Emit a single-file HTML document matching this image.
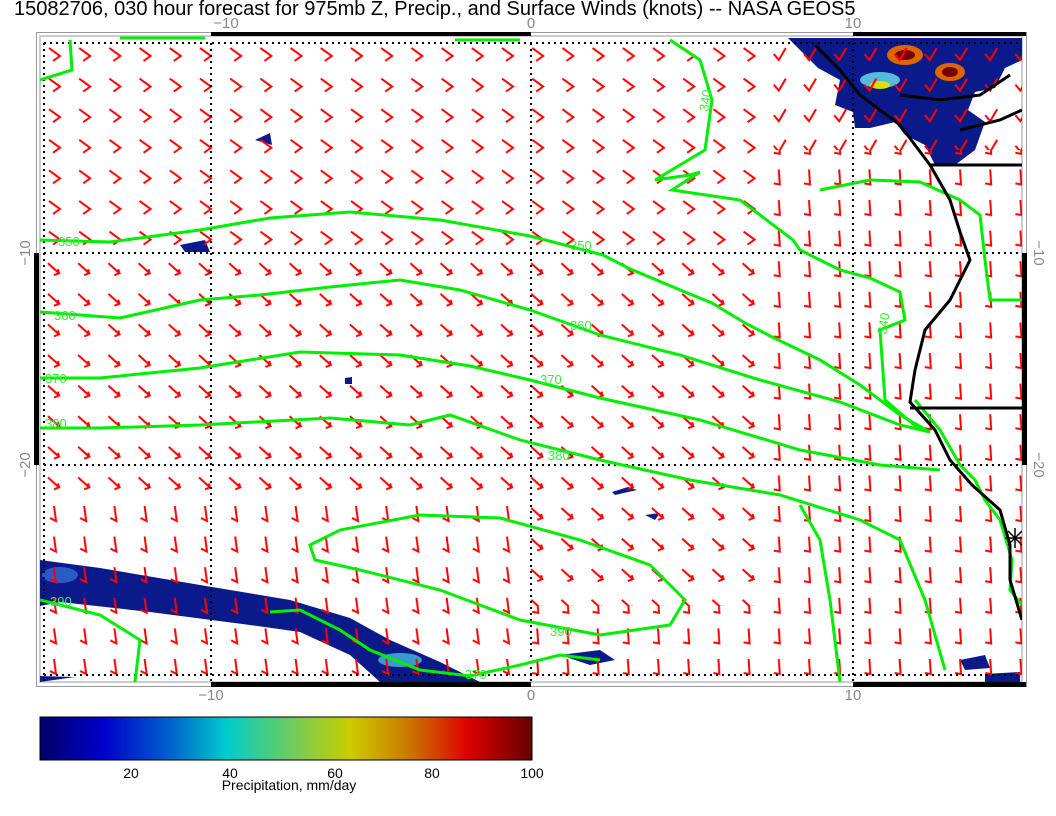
<!DOCTYPE html>
<html><head><meta charset="utf-8"><style>
html,body{margin:0;padding:0;background:#fff;width:1056px;height:816px;overflow:hidden}
svg{display:block}
text{font-family:"Liberation Sans",sans-serif}
</style></head><body>
<svg width="1056" height="816" viewBox="0 0 1056 816" xmlns="http://www.w3.org/2000/svg">
<defs>
<pattern id="pA" patternUnits="userSpaceOnUse" x="44" y="44" width="30.2" height="30.6">
<path d="M5 4 L16 12 L9 17" fill="none" stroke="#f00" stroke-width="2"/></pattern>
<pattern id="pB" patternUnits="userSpaceOnUse" x="44" y="44" width="30.2" height="30.6">
<path d="M4 5 L15 15 L10 17 M15 15 L14 11" fill="none" stroke="#f00" stroke-width="2"/></pattern>
<pattern id="pC" patternUnits="userSpaceOnUse" x="44" y="44" width="30.2" height="30.6">
<path d="M10 3 L12 18 L6 15" fill="none" stroke="#f00" stroke-width="2"/></pattern>
<pattern id="pD" patternUnits="userSpaceOnUse" x="44" y="44" width="30.2" height="30.6">
<path d="M10 3 L11 18 L5 17" fill="none" stroke="#f00" stroke-width="2"/></pattern>
<pattern id="pE" patternUnits="userSpaceOnUse" x="44" y="44" width="30.2" height="30.6">
<path d="M5 10 L10 16 L17 4" fill="none" stroke="#f00" stroke-width="2"/></pattern>
<linearGradient id="cb" x1="0" x2="1" y1="0" y2="0">
<stop offset="0" stop-color="#000066"/><stop offset="0.13" stop-color="#0000cc"/>
<stop offset="0.27" stop-color="#0066cc"/><stop offset="0.38" stop-color="#00cccc"/>
<stop offset="0.5" stop-color="#66cc66"/><stop offset="0.63" stop-color="#cccc00"/>
<stop offset="0.75" stop-color="#cc7700"/><stop offset="0.87" stop-color="#dd0000"/>
<stop offset="1" stop-color="#660000"/></linearGradient>
<clipPath id="map"><rect x="40" y="36" width="982" height="650"/></clipPath>
</defs>
<text x="14" y="15" font-size="20" fill="#000">15082706, 030 hour forecast for 975mb Z, Precip., and Surface Winds (knots) -- NASA GEOS5</text>
<g font-size="15" fill="#888" text-anchor="middle">
<text x="226" y="28">−10</text><text x="531" y="28">0</text><text x="853" y="28">10</text>
<text x="211" y="700">−10</text><text x="531" y="700">0</text><text x="853" y="700">10</text>
<text transform="translate(30,253) rotate(-90)">−10</text>
<text transform="translate(30,465) rotate(-90)">−20</text>
<text transform="translate(1034,253) rotate(90)">−10</text>
<text transform="translate(1034,465) rotate(90)">−20</text>
</g>
<rect x="36.5" y="32.5" width="990" height="654" fill="none" stroke="#999" stroke-width="1"/>
<rect x="40" y="36" width="982" height="646" fill="none" stroke="#ccc" stroke-width="2"/>
<g fill="#000">
<rect x="211" y="32" width="320" height="4"/><rect x="853" y="32" width="173" height="4"/>
<rect x="211" y="682" width="320" height="5"/><rect x="853" y="682" width="173" height="5"/>
<rect x="34" y="253" width="5" height="212"/><rect x="1022" y="253" width="5" height="212"/>
</g>
<g clip-path="url(#map)">
<g fill="#0a1a8a">
<path d="M40 560 L100 568 L200 585 L290 600 L350 618 L390 640 L440 662 L480 682 L380 682 L350 655 L300 632 L250 625 L150 612 L60 602 L40 606Z"/>
<path d="M788 38 H1022 V60 L1005 68 L995 88 L975 92 L968 110 L985 122 L975 150 L955 165 L935 165 L925 145 L905 135 L895 122 L870 128 L855 128 L853 112 L835 105 L840 80 L818 68 Z"/>
<path d="M560 655 L600 650 L615 660 L590 665Z"/>
<path d="M960 660 L985 655 L990 668 L965 670Z"/>
<path d="M180 245 L205 240 L210 252 L185 252Z"/>
<path d="M255 140 L270 133 L272 145Z"/>
<path d="M612 492 L628 487 L637 490 L615 495Z"/>
<path d="M645 515 L660 513 L655 520Z"/>
<path d="M40 676 L75 677 L40 682Z"/>
<path d="M985 674 L1020 672 L1020 682 L985 682Z"/>
<path d="M345 378 L352 377 L352 384 L345 384Z"/>
</g>
<ellipse cx="60" cy="575" rx="18" ry="8" fill="#2a5ac8"/>
<ellipse cx="400" cy="660" rx="22" ry="7" fill="#3a9ad0"/>
<ellipse cx="880" cy="80" rx="20" ry="8" fill="#55bbdd"/>
<ellipse cx="905" cy="55" rx="18" ry="10" fill="#dd6600"/><ellipse cx="905" cy="55" rx="10" ry="5" fill="#770000"/>
<ellipse cx="950" cy="72" rx="15" ry="9" fill="#dd6600"/><ellipse cx="950" cy="72" rx="8" ry="5" fill="#770000"/>
<ellipse cx="880" cy="85" rx="10" ry="4" fill="#dddd00"/>
<rect x="40" y="36" width="720" height="220" fill="url(#pA)"/>
<rect x="760" y="36" width="262" height="114" fill="url(#pE)"/>
<rect x="760" y="150" width="262" height="532" fill="url(#pD)"/>
<rect x="40" y="256" width="720" height="240" fill="url(#pB)"/>
<rect x="40" y="496" width="480" height="186" fill="url(#pC)"/>
<rect x="520" y="496" width="240" height="110" fill="url(#pB)"/>
<rect x="520" y="606" width="240" height="76" fill="url(#pD)"/>
<g stroke="#000" stroke-width="2" stroke-dasharray="2 4" fill="none">
<path d="M211 43V682M531 43V682M853 43V682M44 43H1022M44 253H1022M44 465H1022M44 675H1022M44 43V682"/>
</g>
<g fill="none" stroke="#00ee00" stroke-width="3">
<path d="M70 40 L72 70 L40 80"/>
<path d="M120 38 L205 38"/>
<path d="M455 40 L520 40"/>
<path d="M670 40 L700 60 L712 100 L705 150 L655 180 L690 175 L700 172 L672 190 L740 200 L760 215 L793 240 L800 250 L820 260 L840 270 L870 278 L900 292 L905 320 L880 330 L885 400 L920 430"/>
<path d="M820 190 L870 180 L920 182 L960 200 L980 215 L985 260 L990 300 L1022 300"/>
<path d="M40 240 L110 242 L200 230 L270 218 L350 212 L440 220 L530 236 L603 255 L628 268 L685 292 L712 303 L745 323 L770 336 L820 360 L860 385 L900 415 L930 432"/>
<path d="M40 312 L120 318 L200 300 L260 295 L330 287 L400 280 L460 290 L530 310 L600 335 L680 355 L760 380 L840 402 L900 425 L930 432"/>
<path d="M40 378 L100 378 L200 368 L300 352 L400 355 L470 366 L530 380 L600 398 L700 420 L800 450 L880 465 L940 470"/>
<path d="M40 428 L100 428 L200 425 L330 418 L410 425 L450 415 L520 440 L600 460 L690 480 L780 495 L860 520 L900 540 L925 600 L945 670"/>
<path d="M310 545 L340 530 L420 515 L500 518 L580 540 L650 565 L685 600 L670 625 L600 635 L520 620 L440 590 L360 570 L315 560 Z"/>
<path d="M40 600 L100 615 L140 640 L135 682"/>
<path d="M270 612 L300 610 L340 630 L370 650 L420 670 L470 676 L520 665 L560 655 L600 660"/>
<path d="M800 505 L820 540 L830 600 L840 682"/>
<path d="M915 400 L940 430 L960 465 L975 480 L985 500 L1000 520 L1012 560 L1010 590 L1022 605"/>
</g>
<g font-size="13" fill="#33ee33">
<text x="58" y="246">350</text><text x="570" y="250">350</text>
<text x="54" y="320">360</text><text x="570" y="330">360</text>
<text x="45" y="383">370</text><text x="540" y="384">370</text>
<text x="45" y="428">380</text><text x="548" y="460">380</text>
<text x="550" y="636">390</text><text x="50" y="606">390</text><text x="465" y="679">370</text>
<text transform="translate(886,335) rotate(-80)">340</text>
<text transform="translate(708,112) rotate(-80)">340</text>
</g>
<g fill="none" stroke="#000" stroke-width="3">
<path d="M815 45 L840 70 L860 95 L900 125 L930 165 L950 200 L960 232 L970 260 L950 300 L925 330 L915 370 L910 402 L935 430 L950 460 L972 485 L1000 510 L1010 545 L1010 580 L1022 620"/>
<path d="M910 408 L1022 408"/>
<path d="M930 165 L1022 165"/>
<path d="M960 130 L1000 120 L1022 110"/>
<path d="M900 95 L940 100 L980 95 L1010 75"/>
</g>
<path d="M1005 538 H1025 M1015 528 V548 M1008 531 L1022 545 M1022 531 L1008 545" stroke="#000" stroke-width="1.5"/>
</g>
<rect x="40" y="717" width="492" height="43" fill="url(#cb)" stroke="#000" stroke-width="1"/>
<g font-size="14" fill="#000" text-anchor="middle">
<text x="131" y="778">20</text><text x="230" y="778">40</text><text x="335" y="778">60</text><text x="432" y="778">80</text><text x="532" y="778">100</text>
<text x="289" y="790">Precipitation, mm/day</text>
</g>
</svg>
</body></html>
